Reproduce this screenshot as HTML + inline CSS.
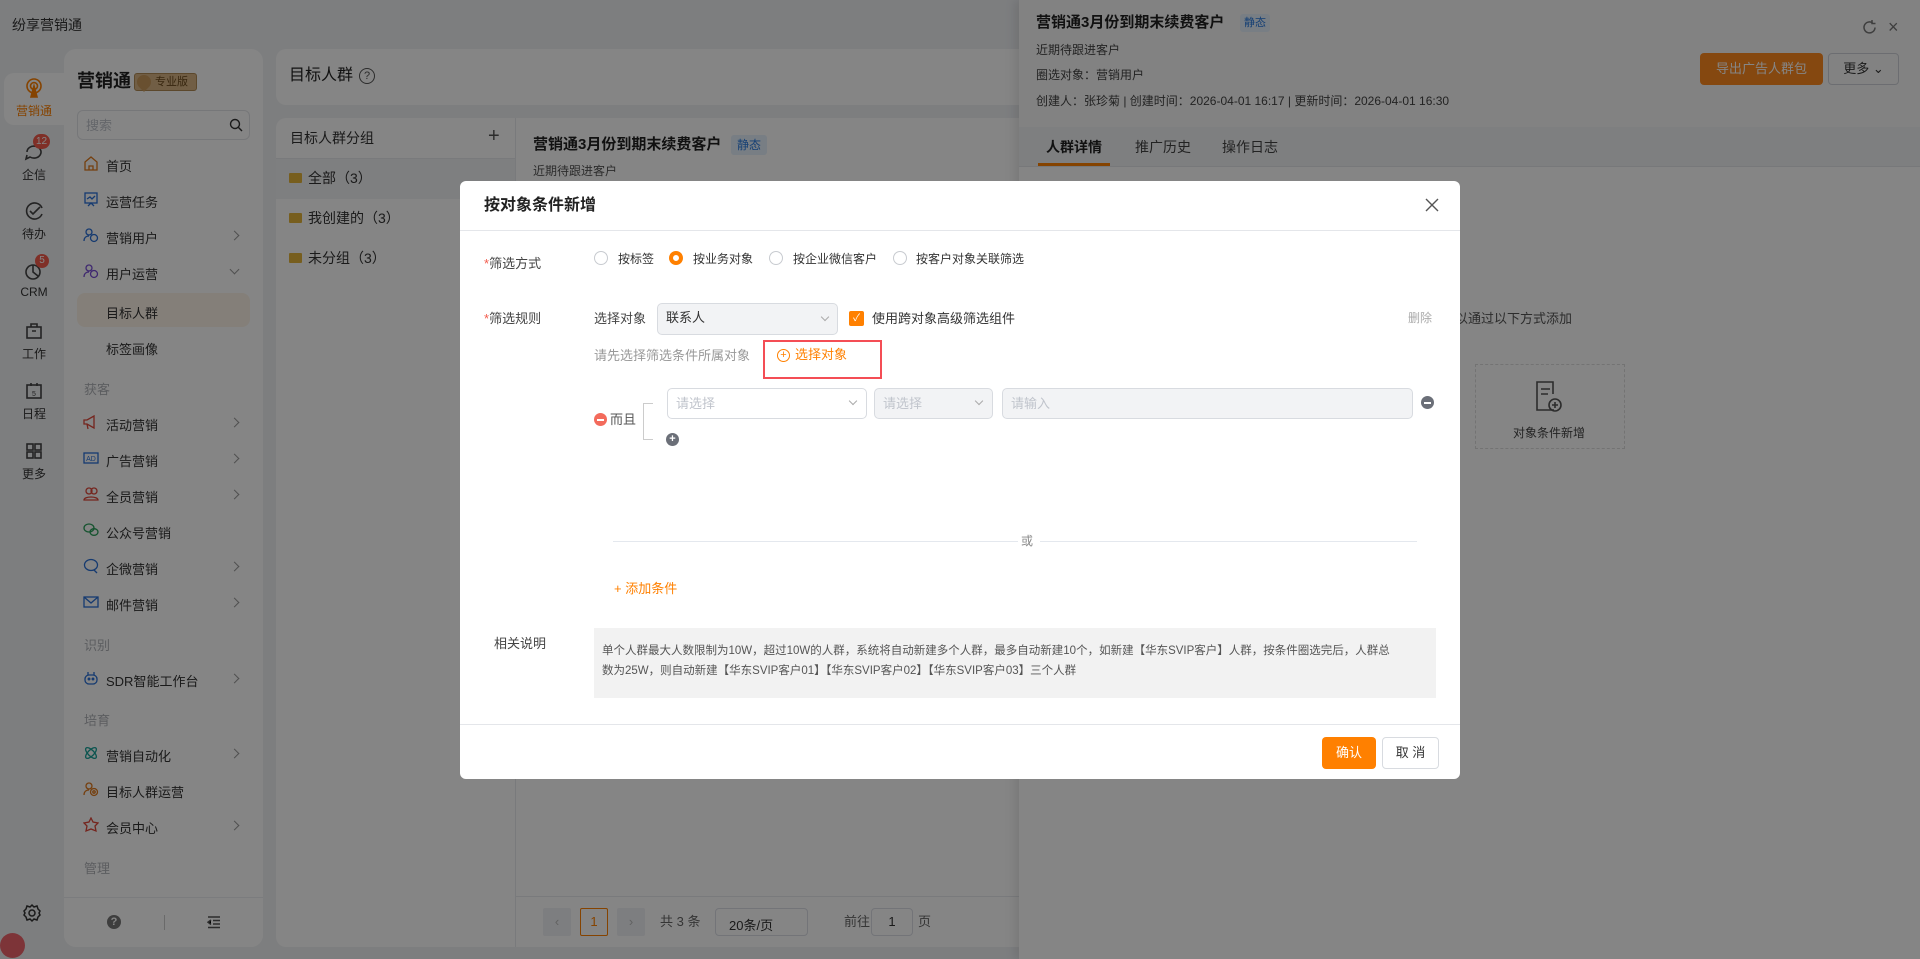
<!DOCTYPE html>
<html><head><meta charset="utf-8"><style>
*{box-sizing:border-box;margin:0;padding:0}
body{width:1920px;height:959px;overflow:hidden;position:relative;background:#eff1f4;font-family:"Liberation Sans","Noto Sans CJK SC",sans-serif;color:#333;font-size:13px}
.a{position:absolute}
.t{position:absolute;white-space:nowrap;line-height:1}
.rail .it{position:absolute;left:4px;width:60px;text-align:center;font-size:12px;color:#333}
.menu .m{position:absolute;left:77px;width:173px;height:34px;font-size:13px;color:#333}
.menu .m span{position:absolute;left:29px;top:7px}
.menu .m svg{position:absolute;left:6px;top:6px}
.menu .m i{position:absolute;right:12px;top:11px;width:7px;height:7px;border-right:1.5px solid #999;border-top:1.5px solid #999;transform:rotate(45deg)}
.grp{position:absolute;left:84px;font-size:13px;color:#b0b3b8}
.ov{position:absolute;left:0;top:0;width:1920px;height:959px;background:rgba(0,0,0,.48)}
.radio{position:absolute;width:14px;height:14px;border:1px solid #c8cbd0;border-radius:50%;background:#fff}
.radio.on{border:4px solid #ff8000}
.btn{position:absolute;border-radius:4px;font-size:13px;text-align:center}
</style></head><body>
<div class="t" style="left:12px;top:18px;font-size:14px;color:#333">纷享营销通</div>
<div class="rail">
<div class="a" style="left:4px;top:73px;width:60px;height:52px;background:#fff;border-radius:10px 0 0 10px"></div>
<div class="it" style="top:77px;color:#ff8000"><svg width="22" height="22" viewBox="0 0 22 22" fill="none" stroke="#ff8000" stroke-width="1.6"><circle cx="11" cy="9" r="7"/><circle cx="11" cy="9" r="3.5"/><path d="M11 9l-3 11h6z" fill="#ff8000"/></svg><div style="margin-top:0">营销通</div></div>
<div class="it" style="top:141px"><svg width="22" height="22" viewBox="0 0 22 22" fill="none" stroke="#444" stroke-width="1.6"><path d="M4 11a7 6 0 1 1 3 5l-4 2 1-4"/></svg><div>企信</div></div>
<div class="a" style="left:33px;top:134px;width:17px;height:15px;border-radius:8px;background:#f35b4c;color:#fff;font-size:10px;text-align:center;line-height:15px">12</div>
<div class="it" style="top:200px"><svg width="22" height="22" viewBox="0 0 22 22" fill="none" stroke="#444" stroke-width="1.6"><path d="M19 8a8 8 0 1 0 0 6"/><path d="M7 11l3 3 7-7"/></svg><div>待办</div></div>
<div class="it" style="top:260px"><svg width="22" height="22" viewBox="0 0 22 22" fill="none" stroke="#444" stroke-width="1.6"><circle cx="10" cy="12" r="7"/><path d="M10 5v7l5 4"/></svg><div>CRM</div></div>
<div class="a" style="left:35px;top:254px;width:14px;height:14px;border-radius:7px;background:#f35b4c;color:#fff;font-size:10px;text-align:center;line-height:14px">5</div>
<div class="it" style="top:320px"><svg width="22" height="22" viewBox="0 0 22 22" fill="none" stroke="#444" stroke-width="1.6"><rect x="4" y="7" width="14" height="11"/><path d="M8 7V4h6v3M9 11h4"/></svg><div>工作</div></div>
<div class="it" style="top:380px"><svg width="22" height="22" viewBox="0 0 22 22" fill="none" stroke="#444" stroke-width="1.6"><rect x="4" y="5" width="14" height="13"/><path d="M8 3v3M14 3v3"/><text x="11" y="16" font-size="7" fill="#444" stroke="none" text-anchor="middle">5</text></svg><div>日程</div></div>
<div class="it" style="top:440px"><svg width="22" height="22" viewBox="0 0 22 22" fill="none" stroke="#444" stroke-width="1.6"><rect x="4" y="4" width="6" height="6"/><rect x="12" y="4" width="6" height="6"/><rect x="4" y="12" width="6" height="6"/><rect x="12" y="12" width="6" height="6"/></svg><div>更多</div></div>
<svg class="a" style="left:22px;top:903px" width="20" height="20" viewBox="0 0 20 20" fill="none" stroke="#333" stroke-width="1.5"><circle cx="10" cy="10" r="3"/><path d="M10 2l2 2 3-1 1 3 2 2-1 2 1 2-2 2-1 3-3-1-2 2-2-2-3 1-1-3-2-2 1-2-1-2 2-2 1-3 3 1z"/></svg>
<div class="a" style="left:0;top:933px;width:25px;height:25px;border-radius:50%;background:#f0656c"></div>
</div>
<div class="a menu" style="left:64px;top:49px;width:199px;height:898px;background:#fff;border-radius:12px"></div>
<div class="menu">
<div class="t" style="left:77px;top:72px;font-size:18px;font-weight:bold;color:#222">营销通</div>
<div class="a" style="left:134px;top:73px;width:63px;height:18px;background:#d8b584;border-radius:3px;border:1px solid #b08a55;font-size:11px;color:#6b4a1d;line-height:16px;padding-left:20px">专业版</div>
<div class="a" style="left:137px;top:75px;width:14px;height:14px;background:#c99a5c;border-radius:50% 50% 50% 0;transform:rotate(-45deg)"></div>
<div class="a" style="left:77px;top:110px;width:173px;height:30px;border:1px solid #e3e5e8;border-radius:6px"><span class="t" style="left:8px;top:8px;color:#c0c4cc;font-size:13px">搜索</span><svg class="a" style="right:6px;top:7px" width="14" height="14" viewBox="0 0 14 14" fill="none" stroke="#333" stroke-width="1.4"><circle cx="6" cy="6" r="4.5"/><path d="M9.5 9.5L13 13"/></svg></div>
<div class="m" style="top:149px"><svg width="16" height="16" viewBox="0 0 16 16" fill="none" stroke="#e07a1c" stroke-width="1.3"><path d="M2 7l6-5 6 5v8H2z"/><path d="M6 15v-4h4v4"/></svg><span>首页</span></div>
<div class="m" style="top:185px"><svg width="16" height="16" viewBox="0 0 16 16" fill="none" stroke="#2a6fd6" stroke-width="1.3"><rect x="2" y="2" width="12" height="10"/><path d="M4 8l3-2 2 2 3-3M5 15l3-3 3 3"/></svg><span>运营任务</span></div>
<div class="m" style="top:221px"><svg width="16" height="16" viewBox="0 0 16 16" fill="none" stroke="#2a6fd6" stroke-width="1.3"><circle cx="6" cy="5" r="3"/><path d="M1 14c0-4 3-5 5-5"/><circle cx="11" cy="11" r="3.5"/></svg><span>营销用户</span><i></i></div>
<div class="m" style="top:257px"><svg width="16" height="16" viewBox="0 0 16 16" fill="none" stroke="#7a4ed6" stroke-width="1.3"><circle cx="6" cy="5" r="3"/><path d="M1 14c0-4 3-5 5-5"/><circle cx="11" cy="11" r="3.5"/></svg><span>用户运营</span><i style="transform:rotate(135deg);top:9px"></i></div>
<div class="m" style="top:293px;background:#fdf3e8;border-radius:8px"><span style="top:10px">目标人群</span></div>
<div class="m" style="top:329px"><span style="top:10px">标签画像</span></div>
<div class="grp" style="top:379px">获客</div>
<div class="m" style="top:408px"><svg width="16" height="16" viewBox="0 0 16 16" fill="none" stroke="#e0473a" stroke-width="1.3"><path d="M1 6h3l7-4v12L4 10H1z"/><path d="M4 10l1 5"/></svg><span>活动营销</span><i></i></div>
<div class="m" style="top:444px"><svg width="16" height="16" viewBox="0 0 16 16"><rect x="1" y="3" width="14" height="10" fill="none" stroke="#2a6fd6" stroke-width="1.3"/><text x="8" y="11" font-size="7" fill="#2a6fd6" text-anchor="middle">AD</text></svg><span>广告营销</span><i></i></div>
<div class="m" style="top:480px"><svg width="16" height="16" viewBox="0 0 16 16" fill="none" stroke="#e0473a" stroke-width="1.3"><circle cx="6" cy="5" r="3"/><circle cx="11" cy="5" r="3"/><path d="M1 14c0-4 14-4 14 0z"/></svg><span>全员营销</span><i></i></div>
<div class="m" style="top:516px"><svg width="16" height="16" viewBox="0 0 16 16" fill="none" stroke="#2aa05a" stroke-width="1.3"><ellipse cx="6" cy="6" rx="5" ry="4"/><ellipse cx="11" cy="10" rx="4" ry="3.3"/></svg><span>公众号营销</span></div>
<div class="m" style="top:552px"><svg width="16" height="16" viewBox="0 0 16 16" fill="none" stroke="#2a6fd6" stroke-width="1.3"><ellipse cx="8" cy="7" rx="6.5" ry="5.5"/><path d="M11 12l3 3"/></svg><span>企微营销</span><i></i></div>
<div class="m" style="top:588px"><svg width="16" height="16" viewBox="0 0 16 16" fill="none" stroke="#2a6fd6" stroke-width="1.3"><rect x="1" y="3" width="14" height="10"/><path d="M1 3l7 6 7-6"/></svg><span>邮件营销</span><i></i></div>
<div class="grp" style="top:635px">识别</div>
<div class="m" style="top:664px"><svg width="16" height="16" viewBox="0 0 16 16" fill="none" stroke="#2a6fd6" stroke-width="1.3"><rect x="2" y="5" width="12" height="9" rx="4"/><circle cx="6" cy="9" r=".8"/><circle cx="10" cy="9" r=".8"/><path d="M5 5V2M11 5V2"/></svg><span>SDR智能工作台</span><i></i></div>
<div class="grp" style="top:710px">培育</div>
<div class="m" style="top:739px"><svg width="16" height="16" viewBox="0 0 16 16" fill="none" stroke="#1aa39a" stroke-width="1.3"><ellipse cx="8" cy="8" rx="7" ry="3" transform="rotate(45 8 8)"/><ellipse cx="8" cy="8" rx="7" ry="3" transform="rotate(-45 8 8)"/></svg><span>营销自动化</span><i></i></div>
<div class="m" style="top:775px"><svg width="16" height="16" viewBox="0 0 16 16" fill="none" stroke="#e07a1c" stroke-width="1.3"><circle cx="6" cy="5" r="3"/><path d="M1 14c0-4 3-5 5-5"/><circle cx="11" cy="11" r="3.5"/><circle cx="11" cy="11" r="1.2"/></svg><span>目标人群运营</span></div>
<div class="m" style="top:811px"><svg width="16" height="16" viewBox="0 0 16 16" fill="none" stroke="#e0473a" stroke-width="1.3"><path d="M8 1l2 4 5 1-3 3 1 5-5-2-5 2 1-5-3-3 5-1z"/></svg><span>会员中心</span><i></i></div>
<div class="grp" style="top:858px">管理</div>
<div class="a" style="left:64px;top:897px;width:199px;height:50px;background:#fff;border-top:1px solid #eceef1;border-radius:0 0 12px 12px"></div>
<div class="a" style="left:107px;top:915px;width:14px;height:14px;border-radius:50%;background:#777;color:#fff;font-size:11px;font-weight:bold;text-align:center;line-height:14px">?</div>
<div class="a" style="left:164px;top:915px;width:1px;height:15px;background:#ccc"></div>
<svg class="a" style="left:207px;top:915px" width="14" height="14" viewBox="0 0 14 14" stroke="#555" stroke-width="1.5"><path d="M1 2h12M6 5.5h7M6 9h7M1 12.5h12M4 5L1 7.2 4 9.5"/></svg>
</div>
<div class="a" style="left:276px;top:49px;width:760px;height:56px;background:#fff;border-radius:10px"></div>
<div class="t" style="left:289px;top:68px;font-size:16px;color:#222">目标人群</div>
<div class="a" style="left:359px;top:68px;width:16px;height:16px;border:1.3px solid #555;border-radius:50%;font-size:11px;text-align:center;line-height:14px;color:#555">?</div>
<div class="a" style="left:276px;top:118px;width:760px;height:829px;background:#fff;border-radius:10px"></div>
<div class="a" style="left:276px;top:158px;width:239px;height:1px;background:#e8eaee"></div>
<div class="a" style="left:515px;top:118px;width:1px;height:829px;background:#e8eaee"></div>
<div class="t" style="left:290px;top:131px;font-size:14px;color:#333">目标人群分组</div>
<div class="t" style="left:488px;top:126px;font-size:20px;color:#555">+</div>
<div class="a" style="left:276px;top:159px;width:239px;height:40px;background:#f2f3f5"></div>
<div class="a" style="left:289px;top:173px;width:13px;height:10px;background:#e5b53a;border-radius:1px"></div>
<div class="t" style="left:308px;top:171px;font-size:14px">全部（3）</div>
<div class="a" style="left:289px;top:213px;width:13px;height:10px;background:#e5b53a;border-radius:1px"></div>
<div class="t" style="left:308px;top:211px;font-size:14px">我创建的（3）</div>
<div class="a" style="left:289px;top:253px;width:13px;height:10px;background:#e5b53a;border-radius:1px"></div>
<div class="t" style="left:308px;top:251px;font-size:14px">未分组（3）</div>
<div class="t" style="left:533px;top:137px;font-size:15px;font-weight:bold;color:#222">营销通3月份到期末续费客户</div>
<div class="a" style="left:731px;top:135px;width:36px;height:20px;background:#e6f1fd;color:#2a7be0;font-size:12px;text-align:center;line-height:20px;border-radius:3px">静态</div>
<div class="t" style="left:533px;top:165px;font-size:12px;color:#555">近期待跟进客户</div>
<div class="a" style="left:515px;top:896px;width:505px;height:1px;background:#e8eaee"></div>
<div class="a" style="left:543px;top:908px;width:28px;height:28px;background:#f0f2f5;border-radius:2px;color:#bbb;text-align:center;line-height:28px">‹</div>
<div class="a" style="left:580px;top:908px;width:28px;height:28px;border:1px solid #ff8000;border-radius:2px;color:#ff8000;text-align:center;line-height:26px;font-size:13px">1</div>
<div class="a" style="left:617px;top:908px;width:28px;height:28px;background:#f0f2f5;border-radius:2px;color:#bbb;text-align:center;line-height:28px">›</div>
<div class="t" style="left:660px;top:915px;color:#666;font-size:13px">共 3 条</div>
<div class="a" style="left:715px;top:908px;width:93px;height:28px;border:1px solid #dcdfe6;border-radius:4px;font-size:13px;padding:6px 0 0 13px">20条/页</div>
<div class="t" style="left:844px;top:915px;color:#666;font-size:13px">前往</div>
<div class="a" style="left:871px;top:908px;width:42px;height:28px;border:1px solid #dcdfe6;border-radius:4px;text-align:center;line-height:26px">1</div>
<div class="t" style="left:918px;top:915px;color:#666">页</div>
<div class="a" style="left:1019px;top:0;width:901px;height:959px;background:#fff;box-shadow:-4px 0 10px rgba(0,0,0,.1)"></div>
<div class="a" style="left:1019px;top:0;width:901px;height:127px;background:#fafafa"></div>
<div class="a" style="left:1019px;top:127px;width:901px;height:40px;background:#f2f3f6;border-bottom:1px solid #e4e6ea"></div>
<div class="t" style="left:1036px;top:15px;font-size:15px;font-weight:bold;color:#222">营销通3月份到期末续费客户</div>
<div class="a" style="left:1240px;top:14px;width:30px;height:18px;background:#e6f1fd;color:#2a7be0;font-size:11px;text-align:center;line-height:18px;border-radius:3px">静态</div>
<div class="t" style="left:1036px;top:44px;font-size:12px;color:#444">近期待跟进客户</div>
<div class="t" style="left:1036px;top:69px;font-size:12px;color:#444">圈选对象：营销用户</div>
<div class="t" style="left:1036px;top:95px;font-size:12px;color:#444">创建人：张珍菊 | 创建时间：2026-04-01 16:17 | 更新时间：2026-04-01 16:30</div>
<svg class="a" style="left:1861px;top:19px" width="17" height="17" viewBox="0 0 17 17" fill="none" stroke="#777" stroke-width="1.5"><path d="M14 8.5A5.5 5.5 0 1 1 11.5 3.8"/><path d="M11 1v3.5h3.5"/></svg>
<div class="t" style="left:1888px;top:18px;font-size:18px;color:#777">×</div>
<div class="btn" style="left:1700px;top:53px;width:123px;height:32px;background:#ff8a1f;color:#fff;line-height:32px">导出广告人群包</div>
<div class="btn" style="left:1828px;top:53px;width:71px;height:32px;border:1px solid #cfd2d8;line-height:30px;color:#333">更多 ⌄</div>
<div class="t" style="left:1046px;top:140px;font-size:14px;color:#222;font-weight:bold">人群详情</div>
<div class="a" style="left:1038px;top:163px;width:72px;height:3px;background:#ff8000"></div>
<div class="t" style="left:1135px;top:140px;font-size:14px;color:#444">推广历史</div>
<div class="t" style="left:1222px;top:140px;font-size:14px;color:#444">操作日志</div>
<div class="t" style="left:1455px;top:312px;font-size:13px;color:#555">以通过以下方式添加</div>
<div class="a" style="left:1475px;top:364px;width:150px;height:85px;border:1px dashed #ddd"></div>
<svg class="a" style="left:1534px;top:380px" width="30" height="34" viewBox="0 0 30 34" fill="none" stroke="#555" stroke-width="1.6"><path d="M20 30H3V2h16v12"/><path d="M7 9h9M7 14h7"/><circle cx="21" cy="25" r="6"/><path d="M21 22v6M18 25h6"/></svg>
<div class="t" style="left:1513px;top:427px;font-size:12px;color:#444">对象条件新增</div>
<div class="ov"></div>
<div class="a" style="left:460px;top:181px;width:1000px;height:598px;background:#fff;border-radius:6px"></div>
<div class="t" style="left:484px;top:198px;font-size:16px;font-weight:bold;color:#222">按对象条件新增</div>
<svg class="a" style="left:1425px;top:198px" width="14" height="14" viewBox="0 0 14 14" stroke="#555" stroke-width="1.4"><path d="M1 1l12 12M13 1L1 13"/></svg>
<div class="a" style="left:460px;top:230px;width:1000px;height:1px;background:#e4e6ea"></div>
<div class="t" style="left:484px;top:257px;font-size:13px;color:#444"><span style="color:#f35b4c">*</span>筛选方式</div>
<div class="radio" style="left:594px;top:251px"></div><div class="t" style="left:618px;top:253px;font-size:12px">按标签</div>
<div class="radio on" style="left:669px;top:251px"></div><div class="t" style="left:693px;top:253px;font-size:12px">按业务对象</div>
<div class="radio" style="left:769px;top:251px"></div><div class="t" style="left:793px;top:253px;font-size:12px">按企业微信客户</div>
<div class="radio" style="left:893px;top:251px"></div><div class="t" style="left:916px;top:253px;font-size:12px">按客户对象关联筛选</div>
<div class="t" style="left:484px;top:312px;font-size:13px;color:#444"><span style="color:#f35b4c">*</span>筛选规则</div>
<div class="t" style="left:594px;top:312px;font-size:13px;color:#444">选择对象</div>
<div class="a" style="left:657px;top:303px;width:181px;height:32px;background:#f2f3f5;border:1px solid #d8dbe0;border-radius:5px;font-size:13px;padding:7px 0 0 8px;color:#333;line-height:1">联系人<span class="a" style="right:9px;top:10px;width:6px;height:6px;border-right:1px solid #aaa;border-bottom:1px solid #aaa;transform:rotate(45deg)"></span></div>
<div class="a" style="left:849px;top:311px;width:15px;height:15px;background:#ff8000;border-radius:2px;color:#fff;font-size:10px;text-align:center;line-height:15px">✓</div>
<div class="t" style="left:872px;top:312px;font-size:13px;color:#333">使用跨对象高级筛选组件</div>
<div class="t" style="left:1408px;top:312px;font-size:12px;color:#aaa">删除</div>
<div class="t" style="left:594px;top:349px;font-size:13px;color:#999">请先选择筛选条件所属对象</div>
<div class="a" style="left:763px;top:340px;width:119px;height:39px;border:2px solid #f44d55"></div>
<div class="a" style="left:777px;top:349px;width:13px;height:13px;border:1px solid #ff8000;border-radius:50%;color:#ff8000;font-size:11px;text-align:center;line-height:11px">+</div>
<div class="t" style="left:795px;top:348px;font-size:13px;color:#ff8000">选择对象</div>
<div class="a" style="left:667px;top:388px;width:200px;height:31px;border:1px solid #d8dbe0;border-radius:5px;font-size:13px;color:#c0c4cc;padding:8px 0 0 8px;line-height:1">请选择<span class="a" style="right:10px;top:9px;width:6px;height:6px;border-right:1px solid #aaa;border-bottom:1px solid #aaa;transform:rotate(45deg)"></span></div>
<div class="a" style="left:874px;top:388px;width:119px;height:31px;background:#f2f3f5;border:1px solid #d8dbe0;border-radius:5px;font-size:13px;color:#c0c4cc;padding:8px 0 0 8px;line-height:1">请选择<span class="a" style="right:10px;top:9px;width:6px;height:6px;border-right:1px solid #aaa;border-bottom:1px solid #aaa;transform:rotate(45deg)"></span></div>
<div class="a" style="left:1002px;top:388px;width:411px;height:31px;background:#f2f3f5;border:1px solid #d8dbe0;border-radius:5px;font-size:13px;color:#c0c4cc;padding:8px 0 0 8px;line-height:1">请输入</div>
<div class="a" style="left:1421px;top:396px;width:13px;height:13px;border-radius:50%;background:#6b6f78"><div class="a" style="left:3px;top:6px;width:7px;height:1.5px;background:#fff"></div></div>
<div class="a" style="left:594px;top:413px;width:13px;height:13px;border-radius:50%;background:#f36b5c"><div class="a" style="left:3px;top:6px;width:7px;height:1.5px;background:#fff"></div></div>
<div class="t" style="left:610px;top:413px;font-size:13px;color:#555">而且</div>
<div class="a" style="left:643px;top:403px;width:10px;height:37px;border:1px solid #ccc;border-right:none"></div>
<div class="a" style="left:666px;top:433px;width:13px;height:13px;border-radius:50%;background:#6b6f78;color:#fff;font-size:11px;text-align:center;line-height:13px;font-weight:bold">+</div>
<div class="a" style="left:613px;top:541px;width:405px;height:1px;background:#e4e8ee"></div>
<div class="a" style="left:1040px;top:541px;width:377px;height:1px;background:#e4e8ee"></div>
<div class="t" style="left:1021px;top:535px;font-size:12px;color:#888">或</div>
<div class="t" style="left:614px;top:582px;font-size:13px;color:#ff8000">+ 添加条件</div>
<div class="t" style="left:494px;top:637px;font-size:13px;color:#444">相关说明</div>
<div class="a" style="left:594px;top:628px;width:842px;height:70px;background:#f2f2f2"></div>
<div class="t" style="left:602px;top:646px;font-size:11.5px;color:#555">单个人群最大人数限制为10W，超过10W的人群，系统将自动新建多个人群，最多自动新建10个，如新建【华东SVIP客户】人群，按条件圈选完后，人群总</div>
<div class="t" style="left:602px;top:666px;font-size:11.5px;color:#555">数为25W，则自动新建【华东SVIP客户01】【华东SVIP客户02】【华东SVIP客户03】三个人群</div>
<div class="a" style="left:460px;top:724px;width:1000px;height:1px;background:#e4e6ea"></div>
<div class="btn" style="left:1322px;top:737px;width:54px;height:32px;background:#ff8000;color:#fff;line-height:32px">确认</div>
<div class="btn" style="left:1382px;top:737px;width:57px;height:32px;border:1px solid #d8dbe0;color:#333;line-height:30px">取 消</div>
</body></html>
